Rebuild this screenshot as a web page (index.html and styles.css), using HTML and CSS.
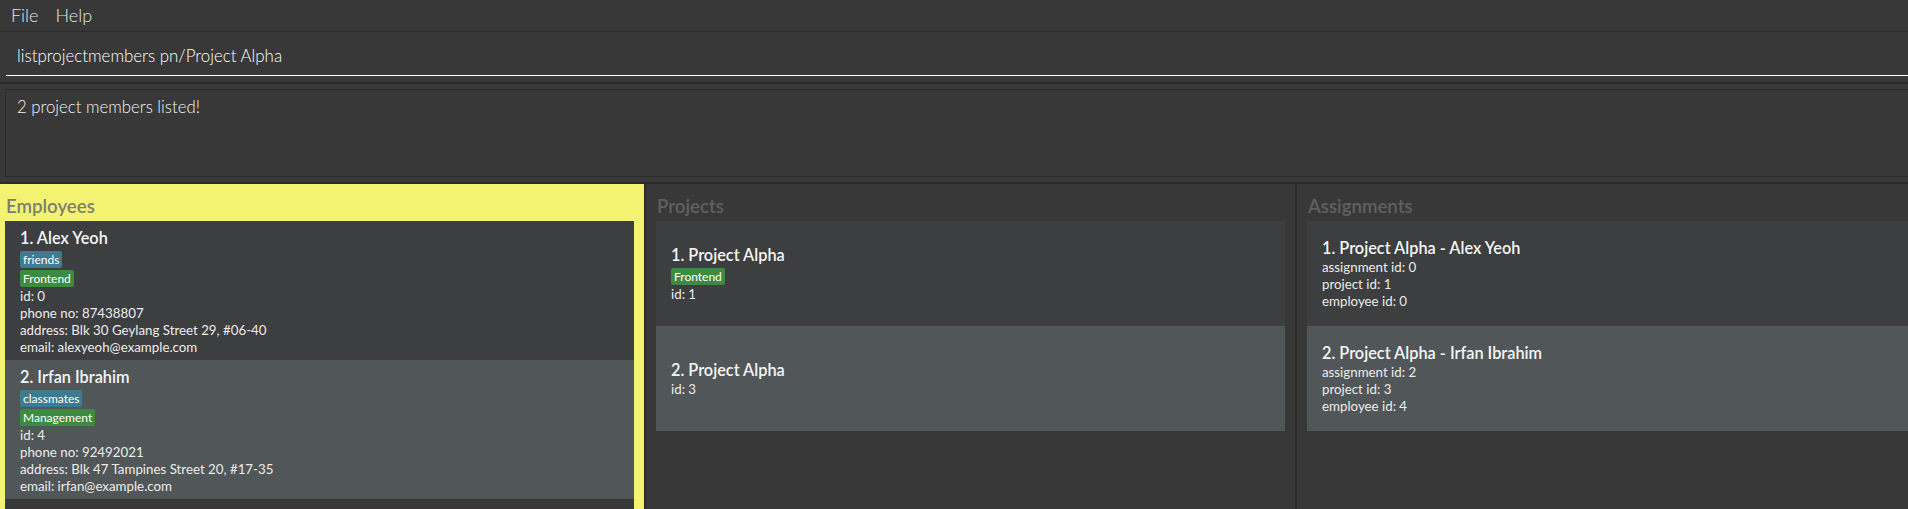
FILE: index.html
```html
<!DOCTYPE html>
<html lang="en">
<head>
<meta charset="utf-8">
<title>Employee Manager</title>
<link rel="stylesheet" href="styles.css">
</head>
<body>
<div class="app">
  <nav class="menubar">
    <span class="menu-item">File</span>
    <span class="menu-item">Help</span>
  </nav>
  <div class="command-pane">
    <div class="command-field">listprojectmembers pn/Project Alpha</div>
  </div>
  <div class="result-pane">
    <div class="result-box">2 project members listed!</div>
  </div>
  <div class="panels">
    <section class="panel panel-employees">
      <h2 class="panel-header">Employees</h2>
      <div class="list">
        <div class="card card-even card-employee">
          <div class="card-title">1. Alex Yeoh</div>
          <div class="tags">
            <span class="tag tag-blue">friends</span>
            <span class="tag tag-green">Frontend</span>
          </div>
          <div class="card-line">id: 0</div>
          <div class="card-line">phone no: 87438807</div>
          <div class="card-line">address: Blk 30 Geylang Street 29, #06-40</div>
          <div class="card-line">email: alexyeoh@example.com</div>
        </div>
        <div class="card card-odd card-employee">
          <div class="card-title">2. Irfan Ibrahim</div>
          <div class="tags">
            <span class="tag tag-blue">classmates</span>
            <span class="tag tag-green">Management</span>
          </div>
          <div class="card-line">id: 4</div>
          <div class="card-line">phone no: 92492021</div>
          <div class="card-line">address: Blk 47 Tampines Street 20, #17-35</div>
          <div class="card-line">email: irfan@example.com</div>
        </div>
      </div>
    </section>
    <section class="panel panel-projects">
      <h2 class="panel-header">Projects</h2>
      <div class="list">
        <div class="card card-even card-centered">
          <div class="card-title">1. Project Alpha</div>
          <div class="tags">
            <span class="tag tag-green">Frontend</span>
          </div>
          <div class="card-line">id: 1</div>
        </div>
        <div class="card card-odd card-centered">
          <div class="card-title">2. Project Alpha</div>
          <div class="card-line">id: 3</div>
        </div>
      </div>
    </section>
    <section class="panel panel-assignments">
      <h2 class="panel-header">Assignments</h2>
      <div class="list">
        <div class="card card-even card-centered">
          <div class="card-title">1. Project Alpha - Alex Yeoh</div>
          <div class="card-line">assignment id: 0</div>
          <div class="card-line">project id: 1</div>
          <div class="card-line">employee id: 0</div>
        </div>
        <div class="card card-odd card-centered">
          <div class="card-title">2. Project Alpha - Irfan Ibrahim</div>
          <div class="card-line">assignment id: 2</div>
          <div class="card-line">project id: 3</div>
          <div class="card-line">employee id: 4</div>
        </div>
      </div>
    </section>
  </div>
</div>
</body>
</html>
```

FILE: styles.css
```css
html, body {
  margin: 0;
  padding: 0;
  background: #383838;
  overflow: hidden;
}

body {
  width: 1908px;
  height: 509px;
  font-family: "Lato", "Open Sans", sans-serif;
  color: #ffffff;
}

.app {
  width: 1950px;
  height: 509px;
  display: flex;
  flex-direction: column;
  background: #383838;
}

/* Menu bar */
.menubar {
  height: 31px;
  border-bottom: 1px solid #2b2b2b;
  display: flex;
  align-items: center;
  gap: 17px;
  padding-left: 11px;
}

.menu-item {
  font-size: 18px;
  font-weight: 300;
  color: #e4e4e4;
  line-height: 31px;
}

/* Command box */
.command-pane {
  height: 50px;
  border-bottom: 2px solid #2b2b2b;
  padding-left: 6px;
}

.command-field {
  height: 44px;
  box-sizing: border-box;
  border-bottom: 1px solid #ffffff;
  padding: 4px 0 0 11px;
  line-height: 40px;
  font-size: 16.9px;
  font-weight: 300;
  color: #ffffff;
}

/* Result display */
.result-pane {
  height: 93px;
  border-bottom: 2px solid #2b2b2b;
  padding: 5px 0 0 5px;
}

.result-box {
  height: 88px;
  box-sizing: border-box;
  border: 1px solid #2c2c2c;
  padding: 6px 0 0 11px;
  line-height: 22px;
  font-size: 16.8px;
  font-weight: 300;
  color: #f4f4f4;
}

/* Panels */
.panels {
  flex: 1;
  display: flex;
  min-height: 0;
}

.panel {
  display: flex;
  flex-direction: column;
  box-sizing: border-box;
}

.panel-employees {
  width: 644px;
  background: #f3f371;
  padding: 0 10px 0 5px;
}

.panel-projects {
  width: 651px;
  border-left: 2px solid #2b2b2b;
  padding: 0 10px;
}

.panel-assignments {
  flex: 1;
  border-left: 2px solid #2b2b2b;
  padding: 0 10px;
}

.panel-header {
  margin: 0;
  height: 37px;
  box-sizing: border-box;
  padding: 8px 0 0 1px;
  line-height: 29px;
  font-size: 18.67px;
  font-weight: 600;
  color: #606060;
}

.panel-employees .panel-header {
  color: #7e7e70;
}

.list {
  flex: 1;
  background: #383838;
}

/* Cards */
.card {
  box-sizing: border-box;
  padding: 6px 0 5px 15px;
}

.card-employee {
  height: 139px;
}

.card-centered {
  height: 105px;
  display: flex;
  flex-direction: column;
  justify-content: center;
  padding: 0 0 0 15px;
}

.card-even {
  background: #3c3e3f;
}

.card-odd {
  background: #515658;
}

.card-title {
  font-size: 16.3px;
  font-weight: 600;
  line-height: 22px;
  color: #f6f6f6;
  white-space: nowrap;
}

.card-line {
  font-size: 13.3px;
  line-height: 17px;
  color: #ececec;
  white-space: nowrap;
}

.tags {
  display: flex;
  flex-direction: column;
  align-items: flex-start;
  gap: 2px;
  margin: 2px 0 1px;
}

.tag {
  font-size: 12px;
  line-height: 15px;
  padding: 1px 3px;
  border-radius: 2px;
  color: #ffffff;
}

.tag-blue {
  background: #3e7b91;
}

.tag-green {
  background: #3d8b40;
}
```
